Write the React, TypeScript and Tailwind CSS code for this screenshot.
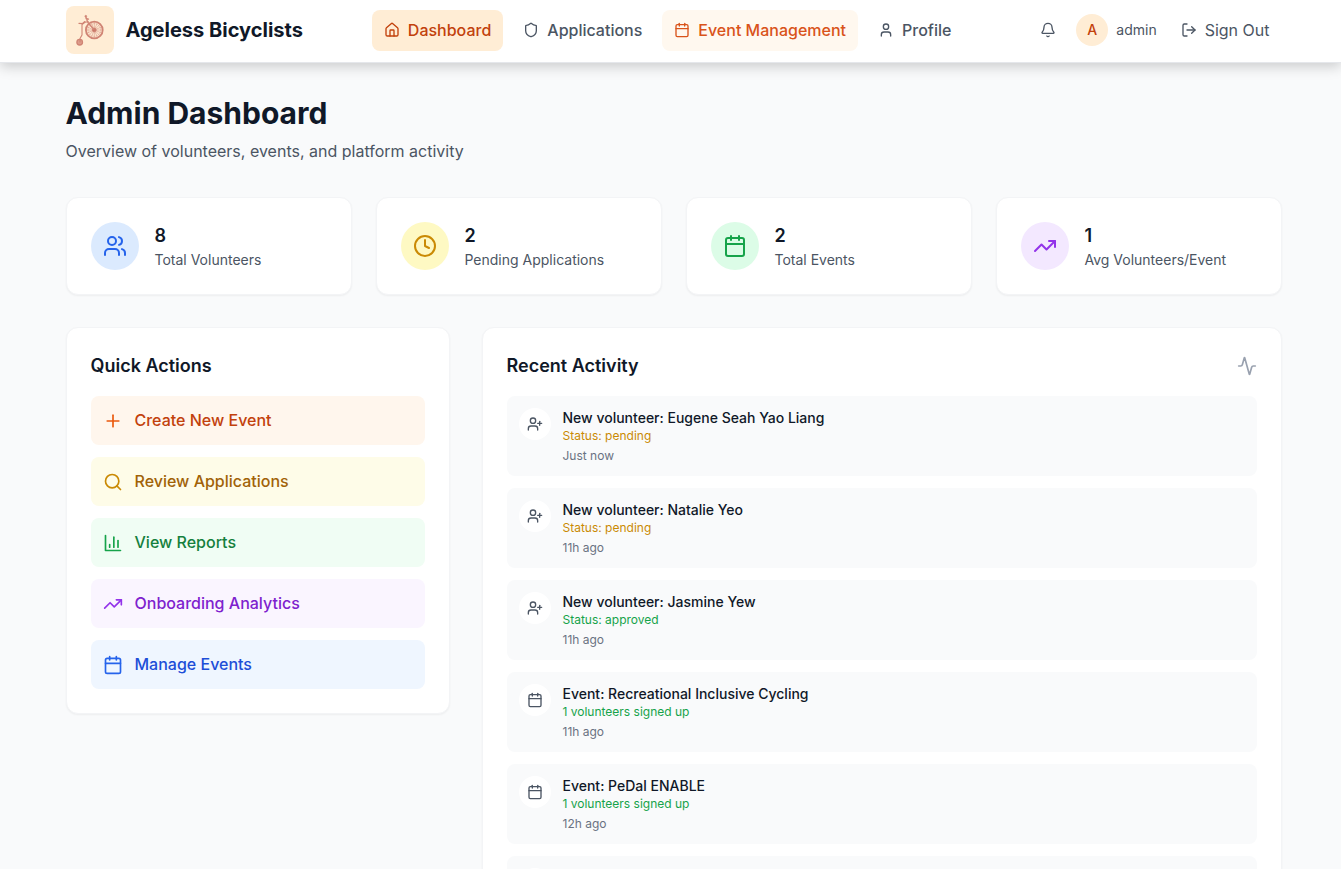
import {
  Activity,
  Bell,
  Calendar,
  Clock,
  House,
  LogOut,
  Plus,
  Search,
  Shield,
  TrendingUp,
  User,
  UserPlus,
  Users,
} from "lucide-react";
import clsx from "clsx";
import type { ComponentType } from "react";

type Icon = ComponentType<{ className?: string }>;

const BarChart: Icon = ({ className }) => (
  <svg
    viewBox="0 0 24 24"
    fill="none"
    stroke="currentColor"
    strokeWidth="2"
    strokeLinecap="round"
    strokeLinejoin="round"
    className={className}
    aria-hidden="true"
  >
    <path d="M3 3v18h18" />
    <path d="M18 17V9" />
    <path d="M13 17V5" />
    <path d="M8 17v-3" />
  </svg>
);

const navItems: { title: string; icon: Icon; className: string }[] = [
  { title: "Dashboard", icon: House, className: "bg-[#ffedd5] text-[#c2410c]" },
  { title: "Applications", icon: Shield, className: "text-[#4b5563]" },
  { title: "Event Management", icon: Calendar, className: "bg-[#fff8ef] text-[#d9531a]" },
  { title: "Profile", icon: User, className: "text-[#4b5563]" },
];

const stats: { value: number; label: string; icon: Icon; className: string }[] = [
  { value: 8, label: "Total Volunteers", icon: Users, className: "bg-[#dbeafe] text-[#2563eb]" },
  { value: 2, label: "Pending Applications", icon: Clock, className: "bg-[#fef9c3] text-[#ca8a04]" },
  { value: 2, label: "Total Events", icon: Calendar, className: "bg-[#dcfce7] text-[#16a34a]" },
  { value: 1, label: "Avg Volunteers/Event", icon: TrendingUp, className: "bg-[#f3e8ff] text-[#9333ea]" },
];

const actions: { title: string; icon: Icon; className: string; iconClass: string }[] = [
  { title: "Create New Event", icon: Plus, className: "bg-[#fff6ed] text-[#c2410c]", iconClass: "text-[#ea580c]" },
  { title: "Review Applications", icon: Search, className: "bg-[#fefce8] text-[#a16207]", iconClass: "text-[#ca8a04]" },
  { title: "View Reports", icon: BarChart, className: "bg-[#f0fdf4] text-[#15803d]", iconClass: "text-[#16a34a]" },
  { title: "Onboarding Analytics", icon: TrendingUp, className: "bg-[#faf5ff] text-[#7e22ce]", iconClass: "text-[#9333ea]" },
  { title: "Manage Events", icon: Calendar, className: "bg-[#eff6ff] text-[#1d4ed8]", iconClass: "text-[#2563eb]" },
];

const activity = [
  { type: "user", title: "New volunteer: Eugene Seah Yao Liang", detail: "Status: pending", time: "Just now" },
  { type: "user", title: "New volunteer: Natalie Yeo", detail: "Status: pending", time: "11h ago" },
  { type: "user", title: "New volunteer: Jasmine Yew", detail: "Status: approved", time: "11h ago" },
  { type: "event", title: "Event: Recreational Inclusive Cycling", detail: "1 volunteers signed up", time: "11h ago" },
  { type: "event", title: "Event: PeDal ENABLE", detail: "1 volunteers signed up", time: "12h ago" },
  { type: "event", title: "Event: Community Ride", detail: "1 volunteers signed up", time: "12h ago" },
];

function Logo() {
  return (
    <span className="flex size-12 items-center justify-center rounded-lg bg-[#ffedd5]">
      <svg viewBox="0 0 48 48" className="size-12" fill="none" stroke="#d08474" aria-hidden="true">
        <circle cx="28.3" cy="24" r="8.4" strokeWidth="1.8" />
        <circle cx="28.3" cy="24" r="6.4" strokeWidth="0.6" opacity="0.5" />
        <g strokeWidth="0.7" opacity="0.7">
          <path d="M28.3 15.5v17M19.8 24h17M22.3 18l12 12M34.3 18l-12 12M25 16.2l6.6 15.6M31.6 16.2 25 31.8M20.5 20.7l15.6 6.6M36.1 20.7l-15.6 6.6" />
        </g>
        <circle cx="28.3" cy="24" r="1.8" fill="#c46f60" strokeWidth="1" />
        <circle cx="13.7" cy="36.2" r="2.8" fill="#dd9d8c" strokeWidth="1.3" />
        <path d="M14 36v-3.5l2-3.5V18.5l3-2.3 3.4-.5" strokeWidth="1.1" strokeLinecap="round" strokeLinejoin="round" />
        <path d="M13 17.3l3.6.3 2.3-2M20 11.3l1.6 4.6 6.7 8.1M20 12.5l2.5.7" strokeWidth="1.3" strokeLinecap="round" />
        <circle cx="19.8" cy="10.3" r="1" fill="#d08474" strokeWidth="0.5" />
      </svg>
    </span>
  );
}

function Header() {
  return (
    <header className="relative border-b border-gray-200 bg-white pb-0.5 pl-[6px] shadow-[0_4px_12px_rgba(0,0,0,0.18)]">
      <div className="mx-auto flex h-[60px] max-w-7xl items-center justify-between px-8">
        <a href="#" className="flex items-center gap-3">
          <Logo />
          <span className="text-xl font-bold text-gray-900">Ageless Bicyclists</span>
        </a>
        <nav aria-label="Main" className="flex items-center gap-2">
          {navItems.map(({ title, icon: ItemIcon, className }) => (
            <a
              key={title}
              href="#"
              className={clsx("flex items-center gap-2 rounded-lg px-3 py-2 leading-[25px] font-medium", className)}
            >
              <ItemIcon className="size-4" />
              {title}
            </a>
          ))}
        </nav>
        <div className="flex items-center gap-3 text-[#4b5563]">
          <button type="button" aria-label="Notifications" className="p-2">
            <Bell className="size-4" />
          </button>
          <div className="flex items-center gap-2">
            <span className="flex size-8 items-center justify-center rounded-full bg-[#ffedd5] text-sm font-medium text-[#c2410c]">
              A
            </span>
            <span className="text-sm">admin</span>
          </div>
          <button type="button" className="flex items-center gap-2 px-3 py-2 leading-[25px]">
            <LogOut className="size-4" />
            Sign Out
          </button>
        </div>
      </div>
    </header>
  );
}

function StatCard({ value, label, icon: StatIcon, className }: (typeof stats)[number]) {
  return (
    <div className="flex items-center gap-4 rounded-xl border border-gray-100 bg-white p-6 shadow-xs">
      <div className={clsx("flex size-12 items-center justify-center rounded-full", className)}>
        <StatIcon className="size-6" />
      </div>
      <div>
        <p className="text-lg font-semibold text-gray-900">{value}</p>
        <p className="text-sm text-[#4b5563]">{label}</p>
      </div>
    </div>
  );
}

function QuickActions() {
  return (
    <section className="rounded-xl border border-gray-100 bg-white p-6 shadow-xs">
      <h2 className="mb-4 text-lg font-semibold text-gray-900">Quick Actions</h2>
      <div className="flex flex-col gap-3">
        {actions.map(({ title, icon: ActionIcon, className, iconClass }) => (
          <button
            key={title}
            type="button"
            className={clsx("flex items-center gap-3 rounded-lg p-3 text-left leading-[25px] font-medium", className)}
          >
            <ActionIcon className={clsx("size-5", iconClass)} />
            {title}
          </button>
        ))}
      </div>
    </section>
  );
}

function RecentActivity() {
  return (
    <section className="col-span-2 rounded-xl border border-gray-100 bg-white p-6 shadow-xs">
      <div className="mb-4 flex items-center justify-between">
        <h2 className="text-lg font-semibold text-gray-900">Recent Activity</h2>
        <Activity className="size-5 text-gray-400" />
      </div>
      <ul className="space-y-3">
        {activity.map(({ type, title, detail, time }) => (
          <li key={title} className="flex items-start gap-3 rounded-lg bg-gray-50 p-3">
            <div className="flex size-8 items-center justify-center rounded-full bg-white text-[#4b5563]">
              {type === "user" ? <UserPlus className="size-4" /> : <Calendar className="size-4" />}
            </div>
            <div>
              <p className="text-sm font-medium text-gray-900">{title}</p>
              <p className={clsx("text-xs", detail.endsWith("pending") ? "text-[#ca8a04]" : "text-[#16a34a]")}>
                {detail}
              </p>
              <p className="mt-1 text-xs text-gray-500">{time}</p>
            </div>
          </li>
        ))}
      </ul>
    </section>
  );
}

export default function App() {
  return (
    <div className="min-h-screen bg-gray-50 font-[Inter,sans-serif]">
      <Header />
      <main className="pl-[6px]">
        <div className="mx-auto max-w-7xl px-8 py-8">
          <div className="mb-[33px]">
            <h1 className="mb-2 text-3xl font-bold text-gray-900">Admin Dashboard</h1>
            <p className="leading-[25px] text-[#4b5563]">Overview of volunteers, events, and platform activity</p>
          </div>
          <div className="mb-8 grid grid-cols-4 gap-6">
            {stats.map((stat) => (
              <StatCard key={stat.label} {...stat} />
            ))}
          </div>
          <div className="grid grid-cols-3 items-start gap-8">
            <QuickActions />
            <RecentActivity />
          </div>
        </div>
      </main>
    </div>
  );
}
